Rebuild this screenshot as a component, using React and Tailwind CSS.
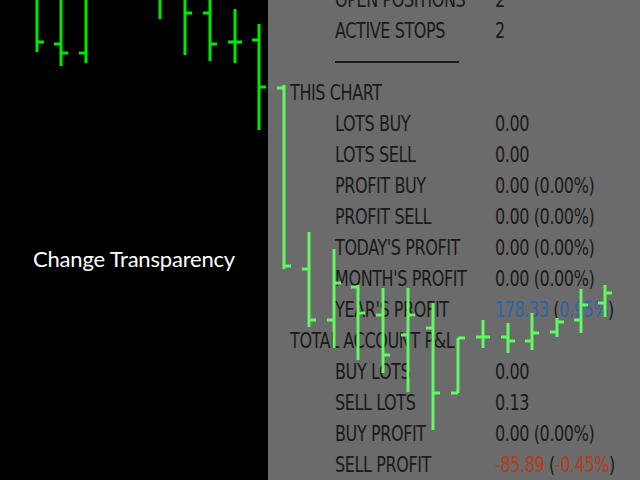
import React from "react";

// OHLC bars: x, high, low, open, close (null = tick off screen)
const bars = [
  [37, -5, 52, null, 42],
  [61, -5, 66, 44, 53],
  [86, -5, 63, 53, null],
  [160, -5, 19, null, null],
  [185, -5, 55, null, 13],
  [210, -5, 61, 13, 44],
  [235, 9, 63, 42, 42],
  [259, 24, 130, 40, 87],
  [284, 85, 269, 88, 266],
  [309, 232, 327, 269, 320],
  [334, 249, 348, 320, 283],
  [358, 285, 360, 287, 313],
  [383, 288, 373, 315, 355],
  [408, 288, 392, 335, 315],
  [433, 303, 430, 328, 393],
  [458, 338, 393, 393, 338],
  [483, 320, 348, 337, 337],
  [508, 323, 353, 337, 341],
  [532, 313, 350, 341, 333],
  [557, 318, 337, 332, 322],
  [581, 289, 333, 320, 305],
  [605, 285, 317, 303, 293],
];

const rows = [
  { label: "OPEN POSITIONS", value: "2" },
  { label: "ACTIVE STOPS", value: "2" },
  { sep: true },
  { section: "THIS CHART" },
  { label: "LOTS BUY", value: "0.00" },
  { label: "LOTS SELL", value: "0.00" },
  { label: "PROFIT BUY", value: "0.00 (0.00%)" },
  { label: "PROFIT SELL", value: "0.00 (0.00%)" },
  { label: "TODAY'S PROFIT", value: "0.00 (0.00%)" },
  { label: "MONTH'S PROFIT", value: "0.00 (0.00%)" },
  { label: "YEAR'S PROFIT", amount: "178.33", pct: "0.95%", tone: "text-[#2b63ad]" },
  { section: "TOTAL ACCOUNT P&L" },
  { label: "BUY LOTS", value: "0.00" },
  { label: "SELL LOTS", value: "0.13" },
  { label: "BUY PROFIT", value: "0.00 (0.00%)" },
  { label: "SELL PROFIT", amount: "-85.89", pct: "-0.45%", tone: "text-[#b23c1c]" },
];

function Chart() {
  return (
    <svg className="absolute inset-0 pointer-events-none" width="640" height="480" viewBox="0 0 640 480">
      {bars.map(([x, hi, lo, op, cl], i) => {
        const c = x < 266 ? "#00e800" : "#62f962";
        return (
          <g key={i} stroke={c} strokeWidth="3">
            <line x1={x} y1={hi} x2={x} y2={lo} />
            {op !== null && <line x1={x - 7} y1={op} x2={x} y2={op} />}
            {cl !== null && <line x1={x} y1={cl} x2={x + 7} y2={cl} />}
          </g>
        );
      })}
    </svg>
  );
}

const narrow = "inline-block origin-left scale-x-[0.81] whitespace-nowrap";

export default function App() {
  return (
    <div className="relative w-[640px] h-[480px] bg-black overflow-hidden flex">
      <div className="w-[268px] shrink-0 flex items-center pl-[33px] pt-[36px]">
        <span
          className="text-white text-[22px] tracking-[-0.2px]"
          style={{ fontFamily: "Lato, 'Open Sans', sans-serif" }}
        >
          Change Transparency
        </span>
      </div>

      <div
        className="flex-1 min-w-0 bg-[#6b6b6b] text-[#1a1a1a] text-[22px] tracking-[-0.5px]"
        style={{ fontFamily: "'Liberation Sans Narrow', 'DejaVu Sans Condensed', 'Roboto Condensed', 'Liberation Sans', sans-serif" }}
      >
        <div className="-mt-[16px] flex flex-col">
          {rows.map((r, i) => {
            if (r.sep)
              return (
                <div key={i} className="h-[31px] flex items-center pl-[67px]">
                  <div className="w-[124px] h-[2px] bg-[#1a1a1a]" />
                </div>
              );
            if (r.section)
              return (
                <div key={i} className="h-[31px] leading-[31px] pl-[22px]">
                  <span className={narrow}>{r.section}</span>
                </div>
              );
            return (
              <div key={i} className="h-[31px] leading-[31px] pl-[67px] flex">
                <span className="w-[160px] shrink-0">
                  <span className={narrow}>{r.label}</span>
                </span>
                {r.amount ? (
                  <span className={narrow}>
                    <span className={r.tone}>{r.amount}</span> (
                    <span className={r.tone}>{r.pct}</span>)
                  </span>
                ) : (
                  <span className={narrow}>{r.value}</span>
                )}
              </div>
            );
          })}
        </div>
      </div>

      <Chart />
    </div>
  );
}
